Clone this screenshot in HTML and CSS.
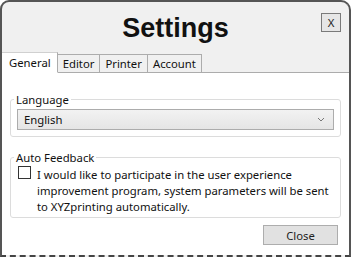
FILE: index.html
```html
<!DOCTYPE html>
<html lang="en">
<head>
    <meta charset="UTF-8">
    <title>Settings</title>
    <link rel="stylesheet" href="styles.css">
</head>
<body>

    <div class="window">
        <div class="header">
            <h1>Settings</h1>
            <button class="close-x">X</button>
        </div>

        <div class="tabs">
            <div class="tab active">General</div>
            <div class="tab">Editor</div>
            <div class="tab">Printer</div>
            <div class="tab">Account</div>
            <div class="tab-fill"></div>
        </div>

        <div class="content">
            <fieldset class="group lang-group">
                <legend>Language</legend>
                <div class="select">
                    <span>English</span>
                    <svg width="8" height="5" viewBox="0 0 8 5"><path d="M1 1 L4 4 L7 1" fill="none" stroke="#777" stroke-width="1"/></svg>
                </div>
            </fieldset>

            <fieldset class="group feedback-group">
                <legend>Auto Feedback</legend>
                <label class="check-row">
                    <span class="checkbox"></span>
                    <span class="check-text">I would like to participate in the user experience improvement program, system parameters will be sent to XYZprinting automatically.</span>
                </label>
            </fieldset>

            <div class="footer">
                <button class="close-btn">Close</button>
            </div>
        </div>
    </div>

</body>
</html>
```

FILE: styles.css
```css
* {
    box-sizing: border-box;
}

body {
    margin: 0;
    background-color: #ffffff;
    font-family: 'Noto Sans', sans-serif;
    font-size: 11.3px;
    color: #111;
}

.window {
    width: 351px;
    height: 257px;
    border: 2px solid #555;
    border-bottom: 2px dashed #444;
    border-radius: 9px 10px 0 0;
    background-color: #f0f0f0;
    display: flex;
    flex-direction: column;
    overflow: hidden;
}

.header {
    height: 50px;
    display: flex;
    align-items: center;
    justify-content: center;
    position: relative;
}

.header h1 {
    margin: 0;
    font-family: 'Liberation Sans', Arial, sans-serif;
    font-size: 27px;
    font-weight: bold;
    color: #111;
    padding-top: 2px;
}

.close-x {
    position: absolute;
    right: 8px;
    top: 11px;
    width: 20px;
    height: 19px;
    padding: 0;
    border: 1px solid #7a7a7a;
    background-color: #e6e6e6;
    font-family: 'Noto Sans', sans-serif;
    font-size: 11.3px;
    line-height: 16px;
    color: #222;
}

.tabs {
    display: flex;
    align-items: flex-end;
    height: 21px;
}

.tab {
    height: 19px;
    padding: 0 5px;
    border: 1px solid #acacac;
    border-left: none;
    background-color: #f0f0f0;
    line-height: 17px;
}

.tab.active {
    height: 21px;
    padding: 0 6px 0 7px;
    background-color: #fff;
    border-bottom-color: #fff;
    border-top-color: #d0d0d0;
    line-height: 20px;
}

.tab-fill {
    flex: 1;
    border-bottom: 1px solid #acacac;
}

.content {
    flex: 1;
    background-color: #fff;
    padding: 19px 8px 0 8px;
}

.group {
    margin: 0;
    border: 1px solid #dcdcdc;
    border-radius: 3px;
    padding: 0 6px 6px 6px;
    min-width: 0;
}

.group legend {
    padding: 0 2px;
    margin-left: -3px;
    line-height: 15px;
}

.select {
    height: 21px;
    margin-top: 2px;
    border: 1px solid #acacac;
    background: linear-gradient(#f2f2f2, #e5e5e5);
    display: flex;
    align-items: center;
    justify-content: space-between;
    padding: 0 8px 0 6px;
}

.feedback-group {
    margin-top: 13px;
    padding-bottom: 2px;
}

.check-row {
    display: flex;
    align-items: flex-start;
    gap: 6px;
}

.checkbox {
    flex: none;
    width: 13px;
    height: 13px;
    border: 1px solid #333;
    background-color: #fff;
    margin-top: 1px;
    margin-left: 1px;
}

.check-text {
    line-height: 16px;
    padding-top: 2px;
}

.footer {
    display: flex;
    justify-content: flex-end;
    padding: 7px 3px 0 0;
}

.close-btn {
    width: 75px;
    height: 20px;
    padding: 0;
    border: 1px solid #adadad;
    background-color: #e1e1e1;
    font-family: 'Noto Sans', sans-serif;
    font-size: 11.3px;
    color: #1e1e1e;
}
```
